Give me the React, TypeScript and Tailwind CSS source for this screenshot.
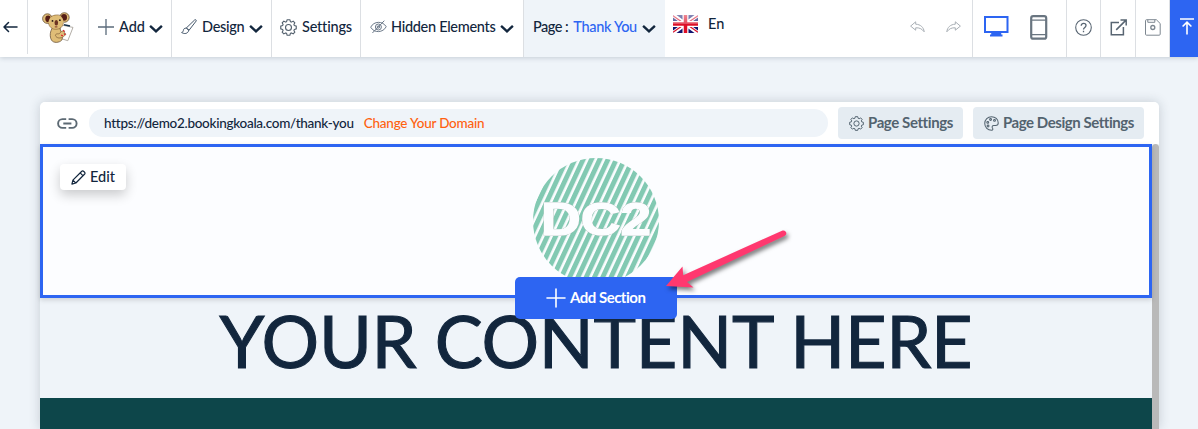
import React from "react";

interface IIconProps {
  className?: string;
}

interface IMenuItemProps {
  className: string;
  label: string;
  labelClassName: string;
  icon?: React.ReactNode;
  chevron?: boolean;
}

const BackArrow = () => (
  <svg width="15" height="12" viewBox="0 0 15 12" fill="none" stroke="#12263d" strokeWidth="1.5" strokeLinecap="round" strokeLinejoin="round">
    <path d="M14 6H1M5.5 1.5 1 6l4.5 4.5" />
  </svg>
);

const Chevron = ({ className }: IIconProps) => (
  <svg className={className} width="14" height="10" viewBox="0 0 14 10" fill="none" stroke="#12263d" strokeWidth="2.4">
    <path d="m1.1 1.8 5.9 5.6 5.9-5.6" />
  </svg>
);

const Plus = () => (
  <svg width="16" height="16" viewBox="0 0 16 16" stroke="#5b6b7b" strokeWidth="1.3">
    <path d="M8 0v16M0 8h16" />
  </svg>
);

const Brush = () => (
  <svg width="16" height="16" viewBox="0 0 16 16" fill="none" stroke="#44566a" strokeWidth="1" strokeLinejoin="round">
    <path d="M5.3 9 13.6 1c1-.8 2.1.1 1.5 1.1L8 11.3 5.3 9Z" />
    <path d="M5.2 9.1c-1.7-.1-2.6.8-2.8 2.3-.1 1.2-.8 1.8-1.8 2.1 2.7 1.7 6.2 1.5 7.3-2.3M5.3 9 8 11.3" />
  </svg>
);

const Gear = ({ className }: IIconProps) => (
  <svg className={className} viewBox="0 0 16 16" fill="none" stroke="currentColor" strokeWidth="1.05" strokeLinejoin="round">
    <path d="M6.7.7h2.6l.5 1.8 1 .4 1.6-.9L14 3.6l-.9 1.6.4 1 1.8.5v2.6l-1.8.5-.4 1 .9 1.6-1.6 1.6-1.6-.9-1 .4-.5 1.8H6.7l-.5-1.8-1-.4-1.6.9L2 12.4l.9-1.6-.4-1L.7 9.3V6.7l1.8-.5.4-1L2 3.6 3.6 2l1.6.9 1-.4L6.7.7Z" />
    <circle cx="8" cy="8" r="2.8" />
  </svg>
);

const HiddenEye = () => (
  <svg width="17" height="14" viewBox="0 0 17 14" fill="none" stroke="#6b7888" strokeWidth="1">
    <path d="M.7 7.2C3.8.9 12.8.7 16.2 6.7 13 12.9 4.1 13.4.7 7.2Z" />
    <circle cx="8.4" cy="7" r="3" />
    <circle cx="8.4" cy="7" r="1.2" />
    <path d="M14.3.7 2.4 13" />
  </svg>
);

const Flag = () => (
  <svg className="rounded-[1px]" width="25" height="18" viewBox="0 0 25 18">
    <defs>
      <linearGradient id="flag-shine" x2="0" y2="1">
        <stop offset="0" stopColor="#fff" stopOpacity=".5" />
        <stop offset=".5" stopColor="#fff" stopOpacity=".25" />
        <stop offset=".5" stopColor="#fff" stopOpacity="0" />
      </linearGradient>
    </defs>
    <path fill="#10146f" d="M0 0h25v18H0z" />
    <path stroke="#fff" strokeWidth="4" d="m0 0 25 18M25 0 0 18" />
    <path stroke="#dc1730" strokeWidth="1.3" d="m0 .7 10 7M25 .7 15 7.5M0 17.3l10-7M25 17.3l-10-7" />
    <path stroke="#fff" strokeWidth="6" d="M12.5 0v18M0 9h25" />
    <path stroke="#dc0f27" strokeWidth="3.5" d="M12.5 0v18M0 9h25" />
    <path fill="url(#flag-shine)" d="M0 0h25v18H0z" />
  </svg>
);

const Koala = () => (
  <svg width="32" height="32" viewBox="0 0 32 32" strokeLinejoin="round">
    <path d="m19.5 13 11.5 2.4-5.2 13.3-10.2-3.2Z" fill="#fff" stroke="#a9a49c" strokeWidth=".9" />
    <path d="M22 12.8 28 14" stroke="#17324b" strokeWidth="1.5" />
    <path d="M10.8 15.5c-2.8 3.4-3.4 9-1.3 12.6 1.9 3.3 7.8 2.7 10.1.2 1.4-1.8.5-4.4.6-6.3L17 14.8Z" fill="#dfbd77" stroke="#5a4027" strokeWidth=".7" />
    <circle cx="5.4" cy="6.6" r="4.8" fill="#dfbd77" stroke="#5a4027" strokeWidth=".7" />
    <circle cx="22.4" cy="5.5" r="4.8" fill="#dfbd77" stroke="#5a4027" strokeWidth=".7" />
    <ellipse cx="6.1" cy="6.8" rx="2.8" ry="3.4" fill="#551e16" />
    <ellipse cx="22" cy="5.4" rx="3" ry="3.3" fill="#551e16" />
    <path d="M6.3 10.6C7.6 4.2 11 2.4 15 3c4.2.4 6.2 3.2 6.4 6.4.1 4.8-3.4 7.9-7.6 8-3.9.1-6.6-2.4-7.5-6.8Z" fill="#dfbd77" />
    <path d="M9 4.8c3-2.3 8.3-2.4 10.5-.7M6.4 11c.9 4.1 3.7 6.4 7.4 6.3 4.1 0 7.2-2.6 7.6-6.2" fill="none" stroke="#7d5a32" strokeWidth=".6" />
    <ellipse cx="14.3" cy="10.8" rx="1.8" ry="2.8" fill="#6c3423" />
    <circle cx="10.5" cy="8.9" r=".9" fill="#261915" />
    <circle cx="17.9" cy="8.2" r=".9" fill="#261915" />
    <path d="M12.8 14.9h2.6" stroke="#7c2e27" strokeWidth="1" />
    <path d="M14 24.5c-1.4-1.5 0-3 2.3-2.6 1.9-.2 2.8-2.9 4.7-3.1 2.1-.1 1.9 1.7 1.1 2.5 2.1-.3 2 1.9.4 2.4-2.3 2.7-6.8 3.1-8.5.8Z" fill="#dfbd77" stroke="#6b4b2d" strokeWidth=".6" />
    <path d="m21.3 18 1.1 1.6m-3.2 3.6 1.6.7m2.5-2.4-.8 1.5" stroke="#da2533" strokeWidth="1.3" />
  </svg>
);

const Undo = ({ className }: IIconProps) => (
  <svg className={className} width="15" height="12" viewBox="0 0 15 12" fill="none" stroke="#a9afb5" strokeWidth="1" strokeLinejoin="round">
    <path d="M5.7.8.6 5.1l5.1 4.1V6.8c3.6-.2 6 .8 8.5 4C13.7 6.3 10.5 3.4 5.7 3.2V.8Z" />
  </svg>
);

const Monitor = () => (
  <svg className="-mt-[2px]" width="25" height="21" viewBox="0 0 25 21" fill="none" stroke="#2d65f2" strokeWidth="2">
    <path d="M1 1h22.5v15H1z" />
    <path d="M8.2 16v2h8v-2M6 19.5h12.5" />
  </svg>
);

const Phone = () => (
  <svg width="18" height="25" viewBox="0 0 18 25" fill="none" stroke="#697580">
    <rect x="1.2" y="1.2" width="15" height="22.5" rx="2" strokeWidth="2.2" />
    <path d="M1.5 5.2h14.5M1.5 19.6h14.5" strokeWidth="1.3" />
  </svg>
);

const Help = () => (
  <svg width="17" height="17" viewBox="0 0 17 17" fill="none" stroke="#586572" strokeWidth="1.1">
    <circle cx="8.5" cy="8.5" r="7.8" />
    <path d="M6.2 6.7c0-3.1 4.8-2.9 4.8-.2 0 1.9-2.5 1.9-2.5 4M8.5 11.7v1.5" strokeWidth="1.3" />
  </svg>
);

const External = () => (
  <svg width="17" height="17" viewBox="0 0 17 17" fill="none" stroke="#586572" strokeWidth="1.5">
    <path d="M9 3.5H1.3v12.2h12.1V8M10.5.9h5.7v5.7M16 1.1 6.2 10.9" />
  </svg>
);

const Save = () => (
  <svg width="16" height="17" viewBox="0 0 16 17" fill="none" stroke="#7d8790" strokeWidth="1">
    <path d="M1.5.7h9.8l3.9 3.8v10.7c0 .6-.4 1-1 1H1.5c-.6 0-1-.4-1-1V1.7c0-.6.4-1 1-1Z" />
    <path d="M2.8.9v2.4h7V.9" />
    <circle cx="7.8" cy="8.5" r="2" strokeWidth="1.3" />
  </svg>
);

const Publish = () => (
  <svg width="14" height="17" viewBox="0 0 14 17" fill="none" stroke="#fff" strokeWidth="1.6">
    <path d="M0 1h14M7 16.5V4.2M2.6 8.5 7 4.1l4.4 4.4" />
  </svg>
);

const LinkIcon = () => (
  <svg width="21" height="11" viewBox="0 0 21 11" fill="none" stroke="#5c6973" strokeWidth="1.9">
    <path d="M9.2 1.1H5.5a4.4 4.4 0 0 0 0 8.8h3.7M11.6 1.1h3.6a4.4 4.4 0 0 1 0 8.8h-3.6M6.3 5.5h8.1" />
  </svg>
);

const Palette = () => (
  <svg width="15" height="15" viewBox="0 0 16 16" fill="none" stroke="currentColor" strokeWidth="1.1">
    <path d="M8 .8a7.2 7.2 0 1 0 0 14.4c1.8 0 1.7-1.5 1-2.4-.7-1.1-.3-2.6 1.3-2.6h2.1c1.7 0 2.8-1.2 2.8-2.7C15.2 3.5 12 .8 8 .8Z" />
    <circle cx="7" cy="3.8" r="1" />
    <circle cx="11.2" cy="4.7" r="1" />
    <circle cx="4" cy="6.8" r="1" />
    <circle cx="4.3" cy="10.7" r="1" />
  </svg>
);

const Pencil = () => (
  <svg width="15" height="15" viewBox="0 0 15 15" fill="none" stroke="#12263d" strokeWidth="1.2" strokeLinejoin="round">
    <path d="M.9 14.1l1-4L10.8 1.3c1.2-1.2 4 1.5 2.9 2.7L4.9 13 .9 14.1ZM9.2 2.9l2.9 2.9M1.9 10.2 4.8 13" />
  </svg>
);

// Diagonal stripes clipped to the round site logo
const SiteLogo = () => (
  <svg width="128" height="128" viewBox="0 0 128 128">
    <defs>
      <pattern id="stripes" width="7.5" height="8" patternUnits="userSpaceOnUse" patternTransform="rotate(25)">
        <path fill="#82c9b2" d="M0 0h4.9v8H0z" />
      </pattern>
    </defs>
    <circle cx="64" cy="64" r="63" fill="url(#stripes)" />
    <text
      x="9"
      y="78"
      textLength="110"
      lengthAdjust="spacingAndGlyphs"
      fill="#fcfdff"
      stroke="#fcfdff"
      strokeWidth="1.4"
      className="font-['Liberation_Sans',sans-serif] text-[46px] font-bold drop-shadow-[0_0_0.5px_#7d918b]"
    >
      DC2
    </text>
  </svg>
);

const PointerArrow = () => (
  <svg className="absolute left-[662px] top-[225px] z-30 drop-shadow-[2px_3px_2px_rgba(0,0,0,0.5)]" width="130" height="68" viewBox="0 0 130 68">
    <path d="M4 61 20.5 41.5 21.2 50.2 120 5.7c3.9-1.5 6.1 3.5 2.5 5.2L25 57l6.5 5.5Z" fill="#ff386f" />
  </svg>
);

const MenuItem = (props: IMenuItemProps) => (
  <button className={`flex h-full shrink-0 items-center border-r border-[#dcdfe3] pb-[3px] ${props.className}`}>
    {props.icon}
    <span className={`whitespace-nowrap ${props.labelClassName}`}>{props.label}</span>
    {props.chevron && <Chevron className="ml-auto mt-[4px]" />}
  </button>
);

const Toolbar = () => (
  <header className="relative z-10 flex h-[57px] w-full bg-white text-[14.5px] font-medium tracking-[-0.3px] shadow-[0_1px_5px_rgba(30,50,70,0.2)]">
    <button className="flex h-[54px] w-7 shrink-0 items-center justify-end border-r border-[#dcdfe3] pr-[9px]">
      <BackArrow />
    </button>
    <div className="flex w-[61px] shrink-0 items-center border-r border-[#dcdfe3] pb-[2px] pl-[14px]">
      <Koala />
    </div>
    <MenuItem className="w-[83px] pl-[9px] pr-[8px]" icon={<Plus />} label="Add" labelClassName="ml-[5px] tracking-normal" chevron />
    <MenuItem className="w-[100px] pl-[9px] pr-[8px]" icon={<Brush />} label="Design" labelClassName="ml-[5px]" chevron />
    <MenuItem className="w-[89px] pl-[8px]" icon={<Gear className="h-[17px] w-[17px] shrink-0 text-[#53606d]" />} label="Settings" labelClassName="ml-[5px] tracking-[-0.2px]" />
    <MenuItem className="w-[163px] pl-[9px] pr-[9px]" icon={<HiddenEye />} label="Hidden Elements" labelClassName="ml-[4px]" chevron />
    <button className="flex w-[141px] shrink-0 items-center bg-[#eff4f9] pb-[3px] pl-[9px] pr-[9px]">
      <span className="whitespace-nowrap tracking-[-0.5px]">Page :</span>
      <span className="ml-[5px] whitespace-nowrap text-[#2d65f2]">Thank You</span>
      <Chevron className="ml-auto mt-[4px]" />
    </button>
    <button className="flex items-center pb-[9px] pl-[8px] tracking-normal">
      <Flag />
      <span className="ml-[10px]">En</span>
    </button>
    <div className="ml-auto flex shrink-0">
      <div className="flex w-[63px] items-center gap-[21px] border-r border-[#dcdfe3] pb-[3px]">
        <Undo />
        <Undo className="-scale-x-100" />
      </div>
      <div className="flex w-[94px] items-center gap-[21px] border-r border-[#dcdfe3] pb-[2px] pl-[11px]">
        <Monitor />
        <Phone />
      </div>
      <button className="flex w-[34px] items-center justify-center border-r border-[#dcdfe3] pb-[3px]"><Help /></button>
      <button className="flex w-[35px] items-center justify-center border-r border-[#dcdfe3] pb-[3px]"><External /></button>
      <button className="flex w-[34px] items-center border-r border-[#dcdfe3] pb-[3px] pl-[9px]"><Save /></button>
      <button className="flex w-7 items-center bg-[#2d65f2] pb-[4px] pl-[10px]"><Publish /></button>
    </div>
  </header>
);

const AddressBar = () => (
  <div className="flex h-[42px] items-center rounded-t-[5px] bg-white pl-[17px] pr-[15px] text-[13.5px] font-medium">
    <LinkIcon />
    <div className="ml-[11px] flex h-7 w-[739px] items-center rounded-full bg-[#eff4f9] pl-[15px]">
      <span className="tracking-[-0.28px]">https://demo2.bookingkoala.com/thank-you</span>
      <span className="ml-[10px] tracking-[-0.22px] text-[#ff610f]">Change Your Domain</span>
    </div>
    <button className="ml-[10px] flex h-8 w-[125px] items-center gap-[4px] rounded-[4px] bg-[#e5ecf2] pl-[11px] text-[15px] font-bold tracking-[-0.4px] text-[#53636f]">
      <Gear className="h-[15px] w-[15px] shrink-0" />
      <span className="whitespace-nowrap pb-px">Page Settings</span>
    </button>
    <button className="ml-[10px] flex h-8 w-[171px] items-center gap-[4px] rounded-[4px] bg-[#e5ecf2] pl-[11px] text-[15px] font-bold tracking-[-0.45px] text-[#53636f]">
      <Palette />
      <span className="whitespace-nowrap pb-px">Page Design Settings</span>
    </button>
  </div>
);

const Preview = () => (
  <main className="mr-[39px] ml-[40px] mt-[45px] h-[327px] rounded-t-[5px] shadow-[0_0_12px_rgba(30,45,60,0.2)]">
    <AddressBar />
    <div className="flex h-[285px]">
      <div className="w-[1112px] bg-[#eff4f9]">
        <section className="relative flex h-[154px] justify-center border-[3px] border-[#2d65f2] bg-[#fcfdff] pt-[10px] shadow-[0_2px_5px_rgba(0,0,0,0.15)]">
          <button className="absolute left-[17px] top-[17px] flex h-[26px] w-[66px] items-center gap-[4px] rounded-[4px] bg-white pl-[11px] text-[14.5px] font-medium shadow-[0_5px_12px_rgba(0,0,0,0.2)]">
            <Pencil />
            Edit
          </button>
          <SiteLogo />
          <button className="absolute left-[472px] top-[130px] z-20 flex h-[42px] w-[162px] items-center gap-[4px] rounded-[5px] bg-[#2d65f2] pl-[31px] text-[15px] font-bold tracking-[-0.5px] text-white">
            <svg width="20" height="20" viewBox="0 0 20 20" stroke="currentColor" strokeWidth="1.6" strokeLinecap="round">
              <path d="M10 1v18M1 10h18" />
            </svg>
            <span className="whitespace-nowrap pb-px">Add Section</span>
          </button>
        </section>
        <h1 className="h-[100px] whitespace-nowrap text-center text-[72px] font-normal leading-[85px] tracking-[-0.25px] [-webkit-text-stroke:1.1px_#12263d]">
          YOUR CONTENT HERE
        </h1>
        <div className="h-[31px] bg-[#0d464a]" />
      </div>
      <div className="w-[7px] rounded-t-[4px] bg-[#b9b9b9]" />
    </div>
  </main>
);

export default function App() {
  return (
    <div className="relative h-[429px] w-[1198px] overflow-hidden bg-[#eff4f9] font-['Lato',sans-serif] text-[#12263d]">
      <Toolbar />
      <Preview />
      <PointerArrow />
    </div>
  );
}
